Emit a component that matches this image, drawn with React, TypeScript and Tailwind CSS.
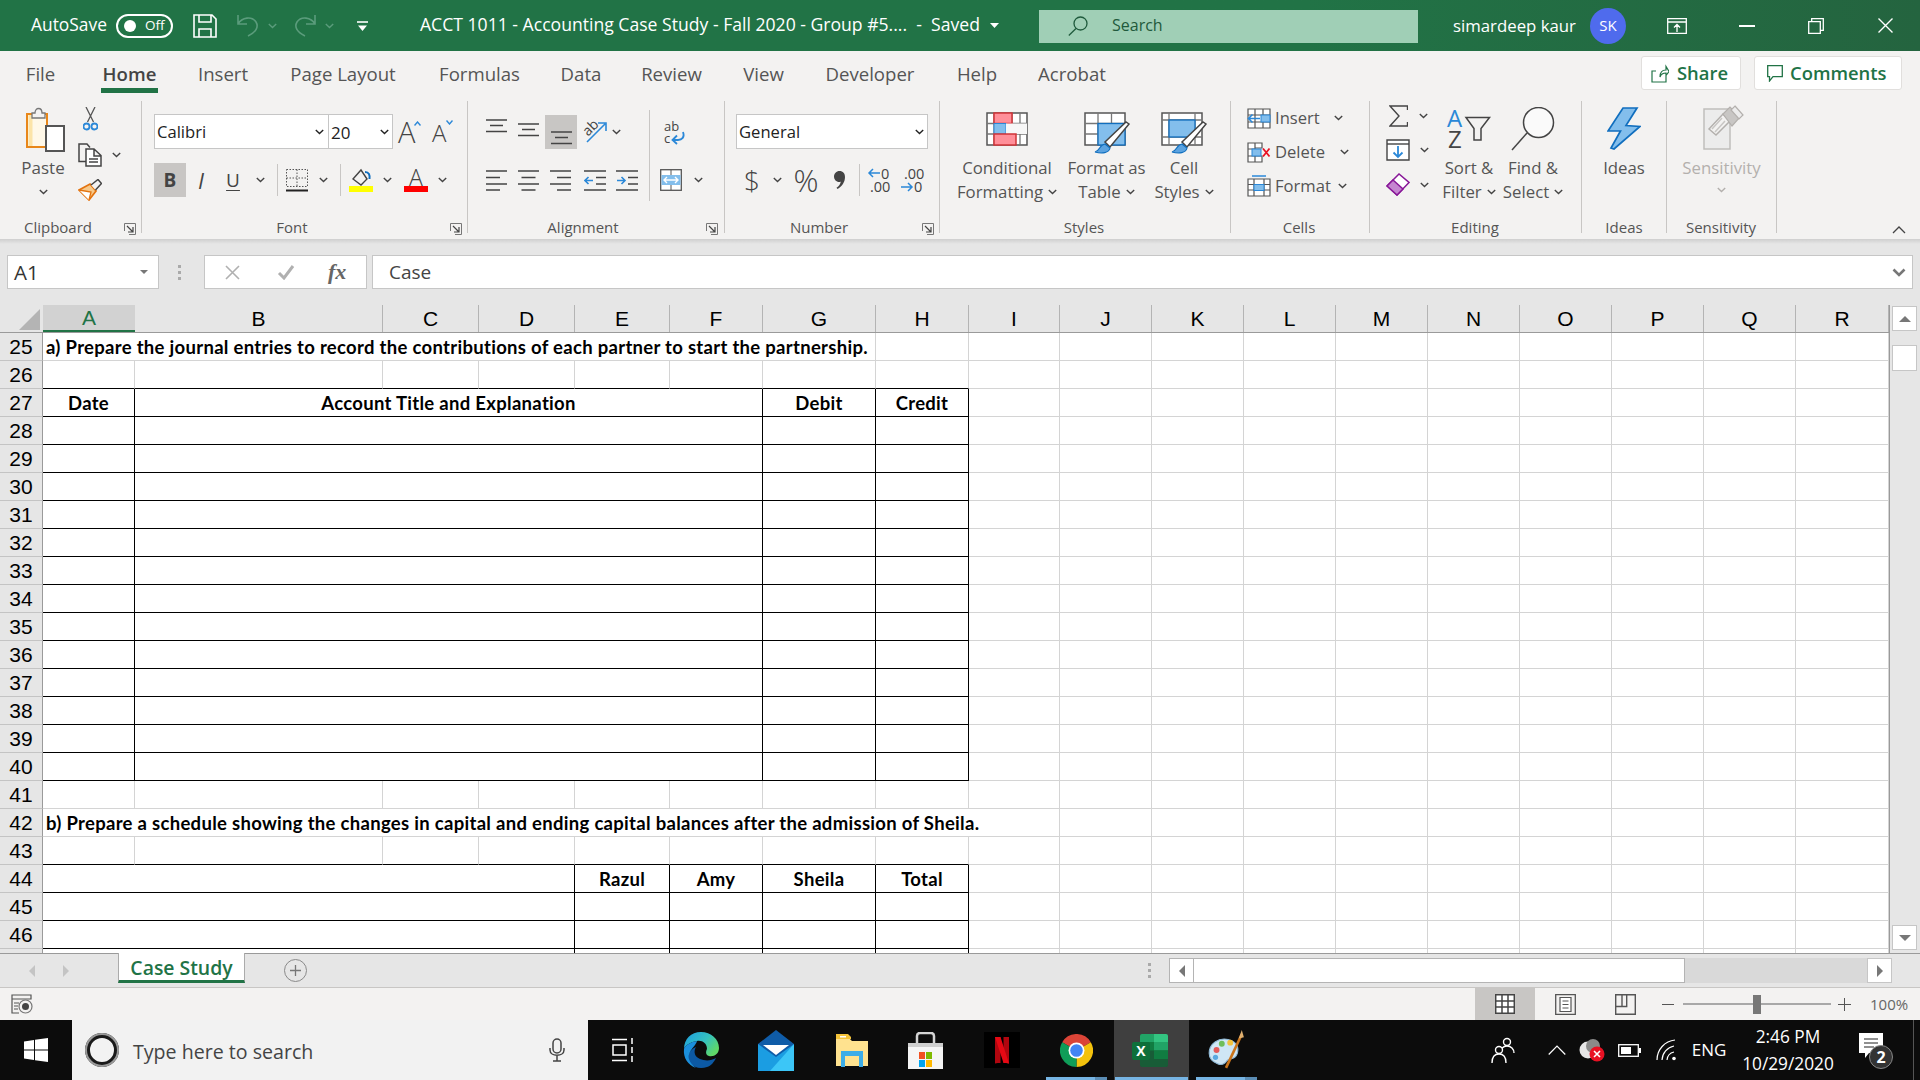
import React from "react";

const Chev = ({ c = "#444", cls = "" }: { c?: string; cls?: string }) => (
  <svg width="9" height="6" viewBox="0 0 9 6" className={`shrink-0 ${cls}`}>
    <path d="M.8 1l3.7 3.6L8.2 1" fill="none" stroke={c} strokeWidth="1.4" />
  </svg>
);

const Launcher = ({ cls }: { cls: string }) => (
  <svg width="12" height="12" viewBox="0 0 12 12" className={`shrink-0 mt-[5px] ${cls}`}>
    <path d="M.5 8V.5H11.5V11.5H5" fill="none" stroke="#777" strokeWidth="1" />
    <path d="M3 3l5.5 5.5M9 4v5H4" fill="none" stroke="#444" strokeWidth="1.2" />
  </svg>
);

const Lines = ({ d, w = 21, h = 14, cls = "" }: { d: string; w?: number; h?: number; cls?: string }) => (
  <svg width={w} height={h} viewBox={`0 0 ${w} ${h}`} className={`shrink-0 ${cls}`}>
    <path d={d} fill="none" stroke="#444" strokeWidth="1.5" />
  </svg>
);

const Group = ({ w, label, lcls, launcher, children }: { w: string; label: string; lcls: string; launcher?: string; children: React.ReactNode }) => (
  <div className={`${w} h-[132px] mt-[4px] border-r border-[#c8c6c4] flex flex-col shrink-0`}>
    <div className="h-[117px] flex shrink-0">{children}</div>
    <div className="h-[15px] flex items-start">
      <span className={`${lcls} text-center leading-[18px] text-[15px] text-[#555] whitespace-nowrap shrink-0`}>{label}</span>
      {launcher && <Launcher cls={launcher} />}
    </div>
  </div>
);

const Brush = () => (
  <g>
    <path d="M45 12l-3-2-21 20 5 5z" fill="#fff" stroke="#444" strokeWidth="1.5" />
    <path d="M11 40c5-1 4-7 10-8l5 4c-1 5-8 6-15 4z" fill="#5ba3e0" stroke="#106ebe" strokeWidth="1.2" />
  </g>
);

const TitleBar = () => (
  <div className="h-[51px] shrink-0 flex items-center text-white bg-linear-to-r from-[#217346] from-[68%] to-[#24643f] text-[16.8px]">
    <span className="ml-[31px] w-[76px] whitespace-nowrap -mt-[3px] text-[17.4px]">AutoSave</span>
    <div className="ml-[9px] w-[57px] h-[24px] rounded-full border-2 border-white flex items-center shrink-0">
      <span className="ml-[6px] w-[12px] h-[12px] rounded-full bg-white"></span>
      <span className="ml-[9px] text-[13.5px]">Off</span>
    </div>
    <svg width="24" height="24" viewBox="0 0 24 24" className="ml-[20px] shrink-0">
      <path d="M1 1h18l4 4v18H1zM6 1v7h12V1M6 23v-8h12v8" fill="none" stroke="#fff" strokeWidth="1.6" />
    </svg>
    <svg width="22" height="23" viewBox="0 0 22 23" className="ml-[20px] shrink-0">
      <path d="M1 1v9h9M1 10C5 3 15 2 19 8c3 5 0 10-8 14" fill="none" stroke="#5b9c7c" strokeWidth="1.6" />
    </svg>
    <Chev c="#5b9c7c" cls="ml-[9px]" />
    <svg width="22" height="23" viewBox="0 0 22 23" className="ml-[17px] shrink-0">
      <path d="M21 1v9h-9M21 10C17 3 7 2 3 8c-3 5 0 10 8 14" fill="none" stroke="#5b9c7c" strokeWidth="1.6" />
    </svg>
    <Chev c="#5b9c7c" cls="ml-[9px]" />
    <svg width="11" height="10" viewBox="0 0 11 10" className="ml-[23px] shrink-0">
      <path d="M0 1h11" stroke="#fff" strokeWidth="1.6" />
      <path d="M1 4.500h9L5.500 10z" fill="#fff" />
    </svg>
    <span className="ml-[52px] w-[559px] whitespace-pre shrink-0 text-[17.6px] -mt-[3px]">ACCT 1011 - Accounting Case Study - Fall 2020 - Group #5....  -  Saved</span>
    <svg width="9" height="5" viewBox="0 0 9 5" className="ml-[11px] shrink-0"><path d="M0 0h9L4.500 5z" fill="#fff" /></svg>
    <div className="ml-[40px] w-[379px] h-[33px] mt-px bg-[#a0cfb6] flex items-center shrink-0 text-[#1f5a3c]">
      <svg width="20" height="20" viewBox="0 0 20 20" className="ml-[29px] shrink-0">
        <circle cx="12.500" cy="7.500" r="6.500" fill="none" stroke="#1f5a3c" strokeWidth="1.3" />
        <path d="M8 12.500L.8 19.500" stroke="#1f5a3c" strokeWidth="1.3" />
      </svg>
      <span className="ml-[24px] text-[16px] -mt-[2px]">Search</span>
    </div>
    <span className="ml-[35px] w-[122px] whitespace-nowrap shrink-0">simardeep kaur</span>
    <div className="ml-[15px] w-[36px] h-[36px] rounded-full bg-[#4f6bed] flex items-center justify-center text-[15px] shrink-0">SK</div>
    <svg width="20" height="16" viewBox="0 0 20 16" className="ml-[41px] shrink-0">
      <path d="M.7.7h18.600v14.600H.7zM.7 4h18.600M10 14V7M7 9.500L10 6.500l3 3" fill="none" stroke="#fff" strokeWidth="1.3" />
    </svg>
    <div className="ml-[52px] w-[16px] h-[2px] bg-white shrink-0"></div>
    <svg width="16" height="16" viewBox="0 0 16 16" className="ml-[53px] shrink-0">
      <path d="M.7 3.700h11.600v11.600H.7zM3.700 3.700V.7h11.600v11.600h-3" fill="none" stroke="#fff" strokeWidth="1.3" />
    </svg>
    <svg width="15" height="15" viewBox="0 0 15 15" className="ml-[54px] shrink-0">
      <path d="M.5.500l14 14M14.500.5l-14 14" stroke="#fff" strokeWidth="1.4" />
    </svg>
  </div>
);

const Tab = ({ w, ml, children, active }: { w: string; ml: string; children: string; active?: boolean }) => (
  <div className={`${w} ${ml} h-[46px] flex flex-col items-center shrink-0`}>
    <span className={`mt-[10px] leading-[26px] h-[26px] whitespace-nowrap text-[18.6px] ${active ? "font-semibold text-[#444]" : "text-[#555]"}`}>{children}</span>
    {active && <span className="mt-px w-full h-[5px] bg-[#217346]"></span>}
  </div>
);

const TabRow = () => (
  <div className="h-[46px] shrink-0 bg-[#f3f2f1] flex items-start">
    <Tab w="w-[29px]" ml="ml-[26px]">File</Tab>
    <Tab w="w-[57px]" ml="ml-[46px]" active>Home</Tab>
    <Tab w="w-[48px]" ml="ml-[41px]">Insert</Tab>
    <Tab w="w-[106px]" ml="ml-[43px]">Page Layout</Tab>
    <Tab w="w-[81px]" ml="ml-[43px]">Formulas</Tab>
    <Tab w="w-[40px]" ml="ml-[41px]">Data</Tab>
    <Tab w="w-[59px]" ml="ml-[41px]">Review</Tab>
    <Tab w="w-[41px]" ml="ml-[42px]">View</Tab>
    <Tab w="w-[90px]" ml="ml-[41px]">Developer</Tab>
    <Tab w="w-[40px]" ml="ml-[42px]">Help</Tab>
    <Tab w="w-[70px]" ml="ml-[40px]">Acrobat</Tab>
    <button className="ml-[534px] mt-[5px] w-[100px] h-[34px] bg-white border border-[#e1dfdd] rounded-[3px] flex items-center shrink-0 text-[#217346] font-semibold text-[18.4px]">
      <svg width="18" height="19" viewBox="0 0 18 19" className="ml-[9px] shrink-0">
        <path d="M15 11v7H1V7h4M9 13c0-5 2-7 6-7V2.500l3 5-3 4V9c-3 0-5 1-6 4z" fill="none" stroke="#217346" strokeWidth="1.2" />
      </svg>
      <span className="ml-[8px]">Share</span>
    </button>
    <button className="ml-[13px] mt-[5px] w-[148px] h-[34px] bg-white border border-[#e1dfdd] rounded-[3px] flex items-center shrink-0 text-[#217346] font-semibold text-[18.4px]">
      <svg width="16" height="17" viewBox="0 0 16 17" className="ml-[12px] shrink-0">
        <path d="M.7.7h14.600v11H6L2.500 16v-4.300H.7z" fill="none" stroke="#217346" strokeWidth="1.3" />
      </svg>
      <span className="ml-[7px]">Comments</span>
    </button>
  </div>
);

const Combo = ({ w, text, cw, mlcls }: { w: string; text: string; cw: string; mlcls: string }) => (
  <div className={`${w} ${mlcls} h-[35px] bg-white border border-[#c6c6c6] flex items-center shrink-0 text-[#222] text-[16.6px]`}>
    <span className={`${cw} ml-[2px] mt-[2px] shrink-0`}>{text}</span>
    <Chev c="#222" />
  </div>
);

const Clipboard = () => (
  <Group w="w-[142px]" label="Clipboard" lcls="ml-[18px] w-[80px]" launcher="ml-[26px]">
    <div className="ml-[23px] w-[40px] flex flex-col items-center shrink-0">
      <svg width="40" height="45" viewBox="0 0 40 45" className="mt-[6px] ml-[3px] shrink-0 overflow-visible">
        <rect x="2" y="7" width="20" height="33" fill="#fff8e8" stroke="#e8871a" strokeWidth="2" />
        <rect x="3.500" y="8" width="4" height="31" fill="#fce4a8" />
        <path d="M7 11V6h3c0-6 7-6 7 0h3v5z" fill="#f3f2f1" stroke="#777" strokeWidth="1.3" />
        <rect x="21" y="19" width="18" height="25" fill="#fff" stroke="#555" strokeWidth="2" />
      </svg>
      <span className="mt-[5px] leading-[22px] text-[17px] text-[#555]">Paste</span>
      <Chev cls="mt-[10px]" />
    </div>
    <div className="ml-[15px] flex flex-col shrink-0">
      <svg width="15" height="24" viewBox="0 0 15 24" className="ml-[5px] mt-[6px] shrink-0">
        <path d="M3 0l7.500 15M12 0L4.500 15" stroke="#555" strokeWidth="1.3" fill="none" />
        <circle cx="3.500" cy="19.500" r="3" fill="none" stroke="#2b88d8" strokeWidth="1.800" />
        <circle cx="11.500" cy="19.500" r="3" fill="none" stroke="#2b88d8" strokeWidth="1.800" />
      </svg>
      <div className="flex items-center mt-[12px]">
        <svg width="24" height="24" viewBox="0 0 24 24" className="shrink-0">
          <path d="M8 18.500H1V1h8l3 3.500" fill="none" stroke="#444" strokeWidth="1.5" />
          <path d="M8 6h8l7 6.500V23H8zM16 6v7h7M11 16h9M11 19h9" fill="#fff" stroke="#444" strokeWidth="1.5" />
        </svg>
        <Chev cls="ml-[10px]" />
      </div>
      <svg width="24" height="22" viewBox="0 0 24 22" className="mt-[12px] shrink-0">
        <path d="M1 11l11-6 6 7-7 9z" fill="#f7c98a" stroke="#e3730f" strokeWidth="1.700" />
        <path d="M1 11l12 2-2 8" fill="#fff" stroke="#e3730f" strokeWidth="1.300" />
        <path d="M13 6l7-5.500 3.500 4L17.500 11" fill="#f3f2f1" stroke="#444" strokeWidth="1.500" />
      </svg>
    </div>
  </Group>
);

const Font = () => (
  <Group w="w-[326px]" label="Font" lcls="ml-[120px] w-[60px]" launcher="ml-[128px]">
    <div className="flex flex-col">
      <div className="mt-[13px] h-[35px] flex items-center">
        <Combo w="w-[175px]" mlcls="ml-[12px]" text="Calibri" cw="w-[158px]" />
        <div className="-ml-px w-[65px] h-[35px] bg-white border border-[#c6c6c6] flex items-center shrink-0 text-[#222] text-[17px]">
          <span className="ml-[2px] mt-[2px] w-[49px]">20</span>
          <Chev c="#222" />
        </div>
        <div className="ml-[5px] w-[22px] flex items-start shrink-0">
          <span className="text-[29px] leading-[27px] text-[#444] font-light">A</span>
          <svg width="7" height="5" viewBox="0 0 7 5" className="mt-[3px] -ml-px shrink-0"><path d="M.5 4.500l3-3.500 3 3.500" fill="none" stroke="#2b88d8" strokeWidth="1.400" /></svg>
        </div>
        <div className="ml-[12px] w-[22px] flex items-start shrink-0">
          <span className="text-[24px] leading-[27px] text-[#444] font-light mt-[2px]">A</span>
          <svg width="7" height="5" viewBox="0 0 7 5" className="mt-[3px] shrink-0"><path d="M.5.500l3 3.500 3-3.500" fill="none" stroke="#2b88d8" strokeWidth="1.400" /></svg>
        </div>
      </div>
      <div className="mt-[14px] h-[34px] flex items-center text-[#444]">
        <span className="ml-[12px] w-[32px] h-[34px] bg-[#c8c6c4] flex items-center justify-center font-bold text-[19px] shrink-0">B</span>
        <span className="ml-[7px] w-[16px] text-center italic text-[22px] shrink-0">I</span>
        <span className="ml-[16px] w-[16px] text-center text-[19px] underline underline-offset-[3px] shrink-0">U</span>
        <Chev cls="ml-[15px]" />
        <span className="ml-[12px] w-px h-[32px] bg-[#c8c6c4] shrink-0"></span>
        <svg width="22" height="23" viewBox="0 0 22 23" className="ml-[8px] shrink-0">
          <path d="M.5.500h21v17H.5zM11 .5v17M.5 9h21" fill="none" stroke="#555" strokeWidth="1" strokeDasharray="1.500 1.500" />
          <path d="M0 21.500h22" stroke="#222" strokeWidth="2" />
        </svg>
        <Chev cls="ml-[11px]" />
        <span className="ml-[12px] w-px h-[32px] bg-[#c8c6c4] shrink-0"></span>
        <svg width="24" height="24" viewBox="0 0 24 24" className="ml-[8px] shrink-0">
          <path d="M4 11l8-9 6 9-6 6z" fill="none" stroke="#444" strokeWidth="1.400" />
          <path d="M16 4c4 0 5 3 4.500 7" fill="none" stroke="#106ebe" strokeWidth="2" />
          <rect x="0" y="18" width="24" height="6" fill="#ffff00" />
        </svg>
        <Chev cls="ml-[10px]" />
        <div className="ml-[12px] w-[24px] h-[24px] flex flex-col items-center shrink-0">
          <span className="text-[23px] leading-[18px] h-[18px] font-light">A</span>
          <span className="w-[24px] h-[6px] bg-[#ff0000]"></span>
        </div>
        <Chev cls="ml-[10px]" />
      </div>
    </div>
  </Group>
);

const L3 = "M0 1h21M4 6.500h13M0 12.500h21";
const Alignment = () => (
  <Group w="w-[257px]" label="Alignment" lcls="ml-[65px] w-[100px]" launcher="ml-[73px]">
    <div className="w-[181px] flex flex-col shrink-0">
      <div className="mt-[14px] h-[34px] flex items-start">
        <Lines d={L3} cls="ml-[18px] mt-[4px]" />
        <Lines d={L3} cls="ml-[11px] mt-[8px]" />
        <div className="ml-[6px] w-[32px] h-[34px] bg-[#c8c6c4] flex items-end justify-center pb-[4px] shrink-0"><Lines d={L3} /></div>
        <svg width="24" height="24" viewBox="0 0 24 24" className="ml-[6px] mt-[4px] shrink-0 overflow-visible">
          <text x="0" y="14" fontSize="14" fill="#444" transform="rotate(-45 7 10)" fontFamily="Open Sans">ab</text>
          <path d="M4 23L22 5M15 4h8v8" fill="none" stroke="#2b88d8" strokeWidth="1.600" />
        </svg>
        <Chev cls="ml-[5px] mt-[14px]" />
      </div>
      <div className="mt-[14px] h-[34px] flex items-center">
        <Lines d="M0 1h21M0 7.500h14M0 14h21M0 20h14" h={21} cls="ml-[18px]" />
        <Lines d="M0 1h21M3.500 7.500h14M0 14h21M3.500 20h14" h={21} cls="ml-[11px]" />
        <Lines d="M0 1h21M7 7.500h14M0 14h21M7 20h14" h={21} cls="ml-[11px]" />
        <svg width="22" height="21" viewBox="0 0 22 21" className="ml-[13px] shrink-0">
          <path d="M0 1h22M12 7.500h10M12 14h10M0 20h22" stroke="#444" strokeWidth="1.500" />
          <path d="M9 10.500H1M4.500 7L1 10.500 4.500 14" fill="none" stroke="#2b88d8" strokeWidth="1.600" />
        </svg>
        <svg width="22" height="21" viewBox="0 0 22 21" className="ml-[10px] shrink-0">
          <path d="M0 1h22M12 7.500h10M12 14h10M0 20h22" stroke="#444" strokeWidth="1.500" />
          <path d="M1 10.500h8M5.500 7L9 10.500 5.500 14" fill="none" stroke="#2b88d8" strokeWidth="1.600" />
        </svg>
      </div>
    </div>
    <span className="w-px h-[91px] mt-[9px] bg-[#c8c6c4] shrink-0"></span>
    <div className="ml-[10px] flex flex-col">
      <svg width="22" height="24" viewBox="0 0 22 24" className="ml-[4px] mt-[20px] shrink-0 overflow-visible">
        <text x="0" y="10" fontSize="13" fill="#444" fontFamily="Open Sans">ab</text>
        <text x="0" y="22" fontSize="13" fill="#444" fontFamily="Open Sans">c</text>
        <path d="M19 11c2 5-1 8-5 8H9M13 14.500L8.500 19l4.500 4" fill="none" stroke="#2b88d8" strokeWidth="1.800" />
      </svg>
      <div className="mt-[24px] flex items-center">
        <svg width="22" height="22" viewBox="0 0 22 22" className="shrink-0">
          <rect x=".7" y=".7" width="20.600" height="20.600" fill="#fff" stroke="#555" strokeWidth="1.300" />
          <rect x="1.500" y="6" width="19" height="10" fill="#83beec" />
          <path d="M4 11h14M7 8l-3 3 3 3M15 8l3 3-3 3" fill="none" stroke="#fff" strokeWidth="1.400" />
          <path d="M11 1v5M11 16v5" stroke="#555" />
        </svg>
        <Chev cls="ml-[12px]" />
      </div>
    </div>
  </Group>
);

const Number_ = () => (
  <Group w="w-[215px]" label="Number" lcls="ml-[54px] w-[80px]" launcher="ml-[63px]">
    <div className="flex flex-col">
      <div className="mt-[13px] h-[35px] flex items-center">
        <Combo w="w-[192px]" mlcls="ml-[11px]" text="General" cw="w-[176px]" />
      </div>
      <div className="mt-[14px] h-[34px] flex items-center text-[#444]">
        <span className="ml-[17px] w-[20px] text-center text-[28px] font-light leading-none shrink-0">$</span>
        <Chev cls="ml-[11px]" />
        <span className="ml-[9px] w-[30px] text-center text-[31px] font-light leading-none shrink-0">%</span>
        <svg width="12" height="19" viewBox="0 0 12 19" className="ml-[13px] shrink-0">
          <path d="M5.500 0C9 0 11 2.500 11 6c0 5-3 9.500-7.500 12l-1-1.200C5 15 6.500 13 6.800 10.500c-.5.400-1 .5-1.600.5C2.300 11 0 8.500 0 5.500 0 2.500 2.300 0 5.500 0z" fill="#444" />
        </svg>
        <span className="ml-[13px] w-px h-[32px] bg-[#c8c6c4] shrink-0"></span>
        <svg width="24" height="26" viewBox="0 0 24 26" className="ml-[8px] shrink-0 overflow-visible">
          <path d="M12 6H1M5 2L1 6l4 4" fill="none" stroke="#2b88d8" strokeWidth="1.500" />
          <text x="13" y="12" fontSize="14.500" fill="#444" fontFamily="Open Sans">0</text>
          <text x="2" y="25" fontSize="14.500" fill="#444" fontFamily="Open Sans">.00</text>
        </svg>
        <svg width="24" height="26" viewBox="0 0 24 26" className="ml-[8px] shrink-0 overflow-visible">
          <text x="4" y="12" fontSize="14.500" fill="#444" fontFamily="Open Sans">.00</text>
          <path d="M1 20h11M8 16l4 4-4 4" fill="none" stroke="#2b88d8" strokeWidth="1.500" />
          <text x="14" y="25" fontSize="14.500" fill="#444" fontFamily="Open Sans">0</text>
        </svg>
      </div>
    </div>
  </Group>
);

const Lab2 = ({ a, b, chev = true, dim }: { a: string; b: string; chev?: boolean; dim?: boolean }) => (
  <div className={`flex flex-col items-center text-[16.8px] leading-[24px] whitespace-nowrap ${dim ? "text-[#b3b0ad]" : "text-[#555]"}`}>
    <span>{a}</span>
    <span className="flex items-center gap-[5px]">{b}{chev && <Chev />}</span>
  </div>
);

const Styles = () => (
  <Group w="w-[291px]" label="Styles" lcls="ml-[104px] w-[80px]">
    <div className="ml-[12px] w-[110px] flex flex-col items-center shrink-0">
      <div className="h-[55px] pt-[11px] shrink-0">
        <svg width="42" height="34" viewBox="0 0 42 34">
          <rect x="1" y="1" width="40" height="32" fill="#fff" stroke="#555" strokeWidth="1.500" />
          <path d="M8 1v32M26 1v32M34 1v32M1 11.500h40M1 22h40" stroke="#777" strokeWidth="1.300" />
          <rect x="8" y="1" width="18" height="10.500" fill="#ff8f99" stroke="#d13438" strokeWidth="1.500" />
          <rect x="8" y="11.500" width="12" height="10.500" fill="#83beec" stroke="#2b88d8" strokeWidth="1" />
          <rect x="20" y="11.500" width="21" height="10.500" fill="#f7f7f7" />
          <rect x="8" y="22" width="22" height="11" fill="#ff8f99" stroke="#d13438" strokeWidth="1.500" />
        </svg>
      </div>
      <Lab2 a="Conditional" b="Formatting" />
    </div>
    <div className="w-[89px] flex flex-col items-center shrink-0">
      <div className="h-[55px] pt-[11px] shrink-0">
        <svg width="46" height="42" viewBox="0 0 46 42">
          <rect x="1" y="1" width="40" height="32" fill="#fff" stroke="#555" strokeWidth="1.500" />
          <path d="M14 1v32M27.500 1v32M1 11.500h40M1 22h40" stroke="#777" strokeWidth="1.300" />
          <rect x="14" y="11.500" width="27" height="21.500" fill="#83beec" stroke="#106ebe" strokeWidth="1.300" />
          <Brush />
        </svg>
      </div>
      <Lab2 a="Format as" b="Table" />
    </div>
    <div className="w-[66px] flex flex-col items-center shrink-0">
      <div className="h-[55px] pt-[11px] shrink-0">
        <svg width="46" height="42" viewBox="0 0 46 42">
          <rect x="1" y="1" width="40" height="32" fill="#fff" stroke="#555" strokeWidth="1.500" />
          <path d="M8 1v32M34 1v32M1 8h40M1 25h40" stroke="#777" strokeWidth="1.300" />
          <rect x="8" y="8" width="26" height="17" fill="#83beec" stroke="#106ebe" strokeWidth="1.300" />
          <Brush />
        </svg>
      </div>
      <Lab2 a="Cell" b="Styles" />
    </div>
  </Group>
);

const CellRow = ({ icon, text, w, chevMl }: { icon: React.ReactNode; text: string; w: string; chevMl: string }) => (
  <div className="h-[34px] flex items-center text-[16.6px] text-[#555]">
    {icon}
    <span className={`ml-[4px] ${w} whitespace-nowrap shrink-0`}>{text}</span>
    <Chev cls={chevMl} />
  </div>
);

const Cells = () => (
  <Group w="w-[139px]" label="Cells" lcls="ml-[48px] w-[40px]">
    <div className="ml-[16px] flex flex-col">
      <CellRow text="Insert" w="w-[45px]" chevMl="ml-[14px]" icon={
        <svg width="24" height="21" viewBox="0 0 24 21" className="shrink-0">
          <path d="M1 1h22v19H1zM1 7h22M1 14h22M8 1v19M16 1v19" fill="#fff" stroke="#555" strokeWidth="1.200" />
          <rect x="14" y="7" width="9" height="7" fill="#83beec" stroke="#2b88d8" />
          <path d="M13 10.500H1.500M5.500 6.500l-4 4 4 4" fill="none" stroke="#2b88d8" strokeWidth="1.600" />
        </svg>} />
      <CellRow text="Delete" w="w-[51px]" chevMl="ml-[14px]" icon={
        <svg width="24" height="21" viewBox="0 0 24 21" className="shrink-0">
          <path d="M1 1h14v5h-7v8h7v6H1zM1 7h7M1 14h7M8 1v5M8 14v6" fill="#fff" stroke="#555" strokeWidth="1.200" />
          <rect x="5" y="7" width="9" height="7" fill="#83beec" stroke="#2b88d8" />
          <path d="M16 6.500l6.500 8M22.500 6.500l-6.500 8" stroke="#e81123" strokeWidth="1.800" />
        </svg>} />
      <CellRow text="Format" w="w-[57px]" chevMl="ml-[6px]" icon={
        <svg width="24" height="22" viewBox="0 0 24 22" className="shrink-0">
          <path d="M1 4h22v17H1zM1 9.500h22M1 15h22M7 4v17M17 4v17" fill="#fff" stroke="#555" strokeWidth="1.200" />
          <rect x="7" y="9.500" width="10" height="6" fill="#83beec" stroke="#2b88d8" />
          <path d="M5 1h14" stroke="#2b88d8" strokeWidth="1.500" />
        </svg>} />
    </div>
  </Group>
);

const Editing = () => (
  <Group w="w-[212px]" label="Editing" lcls="ml-[75px] w-[60px]">
    <div className="ml-[16px] w-[52px] flex flex-col shrink-0">
      <div className="mt-[4px] h-[22px] flex items-center">
        <svg width="19" height="22" viewBox="0 0 19 22" className="ml-[3px] shrink-0">
          <path d="M18.500 5V1H1l9 10-9 10h17.500v-4" fill="none" stroke="#444" strokeWidth="1.400" />
        </svg>
        <Chev cls="ml-[11px]" />
      </div>
      <div className="mt-[12px] h-[22px] flex items-center">
        <svg width="24" height="22" viewBox="0 0 24 22" className="shrink-0">
          <path d="M1 1h22v20H1z" fill="#fff" stroke="#444" strokeWidth="1.400" />
          <path d="M1 5h22" stroke="#444" strokeWidth="1.400" />
          <path d="M12 7v11M7.500 13.500L12 18l4.500-4.500" fill="none" stroke="#2b88d8" strokeWidth="1.800" />
        </svg>
        <Chev cls="ml-[10px]" />
      </div>
      <div className="mt-[12px] h-[23px] flex items-center">
        <svg width="24" height="23" viewBox="0 0 24 23" className="shrink-0">
          <path d="M1 13L13 1l10 8.500L11 22z" fill="#fff" stroke="#881798" strokeWidth="1.500" />
          <path d="M1 13l6-6 10 9-6 6z" fill="#c586d0" stroke="#881798" strokeWidth="1.500" />
        </svg>
        <Chev cls="ml-[10px]" />
      </div>
    </div>
    <div className="w-[62px] flex flex-col items-center shrink-0">
      <div className="h-[55px] pt-[7px] shrink-0">
        <svg width="44" height="41" viewBox="0 0 44 41" className="overflow-visible">
          <text x="0" y="19" fontSize="24" fill="#2b88d8" fontFamily="Open Sans">A</text>
          <text x="1" y="40" fontSize="24" fill="#444" fontFamily="Open Sans">Z</text>
          <path d="M19 9.500h23.500L34 20.500V32h-7V20.500z" fill="none" stroke="#444" strokeWidth="1.500" />
        </svg>
      </div>
      <Lab2 a="Sort &" b="Filter" />
    </div>
    <div className="w-[66px] flex flex-col items-center shrink-0">
      <div className="h-[55px] pt-[6px] shrink-0">
        <svg width="44" height="44" viewBox="0 0 44 44">
          <circle cx="27.500" cy="15.500" r="15" fill="#fafafa" stroke="#444" strokeWidth="1.500" />
          <path d="M16 26L1 43" stroke="#444" strokeWidth="1.500" />
        </svg>
      </div>
      <Lab2 a="Find &" b="Select" />
    </div>
  </Group>
);

const Ideas = () => (
  <Group w="w-[85px]" label="Ideas" lcls="ml-[12px] w-[60px]">
    <div className="w-full flex flex-col items-center">
      <div className="h-[55px] pt-[6px] shrink-0">
        <svg width="34" height="43" viewBox="0 0 34 43">
          <path d="M16 1h14L19 18.500 33 19.500 7 42l-3-1 9.500-17L1 24z" fill="#83beec" stroke="#106ebe" strokeWidth="1.700" />
        </svg>
      </div>
      <span className="text-[16.8px] leading-[24px] text-[#555]">Ideas</span>
    </div>
  </Group>
);

const Sensitivity = () => (
  <Group w="w-[110px]" label="Sensitivity" lcls="ml-[14px] w-[80px]">
    <div className="w-full flex flex-col items-center">
      <div className="h-[55px] pt-[4px] ml-[4px] shrink-0">
        <svg width="41" height="45" viewBox="0 0 41 45">
          <path d="M1 4h26v40H1z" fill="#ececec" stroke="#c0bebc" strokeWidth="1.500" />
          <path d="M6 24L20 9l7 7-14 14z" fill="#f3f2f1" stroke="#b3b0ad" strokeWidth="1.500" />
          <path d="M9 24l10-11M12 27L22 16" stroke="#c8c6c4" strokeWidth="1.500" />
          <path d="M20 9l7-7 10 10-8 9z" fill="#c8c6c4" stroke="#b3b0ad" strokeWidth="1.200" />
          <path d="M32 1l8 9-4 4-8-9z" fill="#ececec" stroke="#b3b0ad" strokeWidth="1.200" />
        </svg>
      </div>
      <span className="text-[16.8px] leading-[24px] text-[#b3b0ad]">Sensitivity</span>
      <Chev c="#b3b0ad" cls="mt-[7px]" />
    </div>
  </Group>
);

const Ribbon = () => (
  <div className="h-[142px] shrink-0 bg-[#f3f2f1] flex items-start">
    <Clipboard />
    <Font />
    <Alignment />
    <Number_ />
    <Styles />
    <Cells />
    <Editing />
    <Ideas />
    <Sensitivity />
    <svg width="14" height="8" viewBox="0 0 14 8" className="ml-[115px] mt-[129px] shrink-0">
      <path d="M1 7l6-6 6 6" fill="none" stroke="#444" strokeWidth="1.300" />
    </svg>
  </div>
);

const FormulaBar = () => (
  <div className="h-[66px] shrink-0 bg-[#e6e6e6] flex flex-col">
    <div className="h-[5px] shrink-0 bg-linear-to-b from-[#cfcfcf] to-[#e6e6e6]"></div>
    <div className="mt-[11px] h-[34px] flex items-center">
      <div className="ml-[7px] w-[152px] h-[34px] bg-white border border-[#c6c6c6] flex items-center shrink-0">
        <span className="ml-[6px] mt-px w-[126px] text-[20.5px] text-[#333]">A1</span>
        <svg width="8" height="4" viewBox="0 0 8 4" className="shrink-0"><path d="M0 0h8L4 4z" fill="#777" /></svg>
      </div>
      <svg width="4" height="15" viewBox="0 0 4 15" className="ml-[19px] shrink-0">
        <rect width="3" height="3" fill="#aaa" /><rect y="6" width="3" height="3" fill="#aaa" /><rect y="12" width="3" height="3" fill="#aaa" />
      </svg>
      <div className="ml-[22px] w-[163px] h-[34px] bg-white border border-[#c6c6c6] flex items-center shrink-0">
        <svg width="15" height="15" viewBox="0 0 15 15" className="ml-[20px] shrink-0"><path d="M1 1l13 13M14 1L1 14" stroke="#b0b0b0" strokeWidth="1.600" /></svg>
        <svg width="18" height="15" viewBox="0 0 18 15" className="ml-[37px] shrink-0"><path d="M2 8l5 5L16 1" fill="none" stroke="#b0b0b0" strokeWidth="3" /></svg>
        <span className="ml-[33px] font-['Liberation_Serif',serif] italic font-bold text-[22px] text-[#666] leading-none">fx</span>
      </div>
      <div className="ml-[5px] w-[1541px] h-[34px] bg-white border border-[#c6c6c6] flex items-center shrink-0">
        <span className="ml-[16px] mt-px w-[1503px] text-[19px] text-[#444]">Case</span>
        <svg width="14" height="9" viewBox="0 0 14 9" className="shrink-0"><path d="M1.500 1.500L7 7l5.500-5.500" fill="none" stroke="#777" strokeWidth="2.600" /></svg>
      </div>
    </div>
  </div>
);

const COLS: [string, string][] = [
  ["A", "w-[92px]"], ["B", "w-[248px]"], ["C", "w-[96px]"], ["D", "w-[96px]"], ["E", "w-[95px]"], ["F", "w-[93px]"], ["G", "w-[113px]"], ["H", "w-[93px]"],
  ["I", "w-[91px]"], ["J", "w-[92px]"], ["K", "w-[92px]"], ["L", "w-[92px]"], ["M", "w-[92px]"], ["N", "w-[92px]"], ["O", "w-[92px]"], ["P", "w-[92px]"], ["Q", "w-[92px]"], ["R", "w-[93px]"],
];

const GRAY = "border-r border-b border-[#d4d4d4]";
const BLACK = "border-r border-b border-black";
const BLACKB = "border-r border-b border-r-[#d4d4d4] border-b-black";

const Gc = ({ w, cls = GRAY, children }: { w: string; cls?: string; children?: React.ReactNode }) => (
  <div className={`${w} h-[28px] pt-[3px] shrink-0 ${cls} flex items-center justify-center text-[18.5px] tracking-[0.3px] text-black font-bold font-['Lato',sans-serif] whitespace-nowrap`}>{children}</div>
);

const Rest = ({ from }: { from: number }) => (
  <>{COLS.slice(from).map(([n, w]) => <Gc key={n} w={w} />)}</>
);

const Row = ({ n, children }: { n: number | ""; children: React.ReactNode }) => (
  <div className="flex h-[28px] shrink-0">
    <div className="w-[43px] h-[28px] shrink-0 bg-[#e6e6e6] border-r border-b border-r-[#9a9a9a] border-b-[#c4c4c4] flex items-center justify-center text-[21px] text-black font-['Liberation_Sans',sans-serif]">{n}</div>
    {children}
  </div>
);

const Sheet = () => {
  const rows: React.ReactNode[] = [];
  const plain = (n: number, black: boolean) => (
    <Row n={n} key={n}>
      {COLS.slice(0, 8).map(([l, w]) => <Gc key={l} w={w} cls={black ? BLACKB : GRAY} />)}
      <Rest from={8} />
    </Row>
  );
  const t1 = (n: number, labels: string[]) => (
    <Row n={n} key={n}>
      <Gc w="w-[92px]" cls={BLACK}>{labels[0]}</Gc>
      <Gc w="w-[628px]" cls={BLACK}>{labels[1]}</Gc>
      <Gc w="w-[113px]" cls={BLACK}>{labels[2]}</Gc>
      <Gc w="w-[93px]" cls={BLACK}>{labels[3]}</Gc>
      <Rest from={8} />
    </Row>
  );
  const t2 = (n: number | "", labels: string[], key: number) => (
    <Row n={n} key={key}>
      <Gc w="w-[532px]" cls={BLACK}></Gc>
      <Gc w="w-[95px]" cls={BLACK}>{labels[0]}</Gc>
      <Gc w="w-[93px]" cls={BLACK}>{labels[1]}</Gc>
      <Gc w="w-[113px]" cls={BLACK}>{labels[2]}</Gc>
      <Gc w="w-[93px]" cls={BLACK}>{labels[3]}</Gc>
      <Rest from={8} />
    </Row>
  );
  rows.push(
    <Row n={25} key={25}>
      <Gc w="w-[833px]"><span className="w-full pl-[3px]">a) Prepare the journal entries to record the contributions of each partner to start the partnership.</span></Gc>
      <Gc w="w-[93px]" />
      <Rest from={8} />
    </Row>
  );
  rows.push(plain(26, true));
  rows.push(t1(27, ["Date", "Account Title and Explanation", "Debit", "Credit"]));
  for (let i = 28; i <= 40; i++) rows.push(t1(i, ["", "", "", ""]));
  rows.push(plain(41, false));
  rows.push(
    <Row n={42} key={42}>
      <Gc w="w-[1017px]"><span className="w-full pl-[3px]">b) Prepare a schedule showing the changes in capital and ending capital balances after the admission of Sheila.</span></Gc>
      <Rest from={9} />
    </Row>
  );
  rows.push(plain(43, true));
  rows.push(t2(44, ["Razul", "Amy", "Sheila", "Total"], 44));
  rows.push(t2(45, ["", "", "", ""], 45));
  rows.push(t2(46, ["", "", "", ""], 46));
  rows.push(t2("", ["", "", "", ""], 47));

  return (
    <div className="h-[648px] shrink-0 flex bg-[#e6e6e6]">
      <div className="w-[1889px] h-[648px] shrink-0 flex flex-col overflow-hidden bg-white">
        <div className="flex h-[28px] shrink-0 bg-[#e6e6e6] border-b border-[#9a9a9a]">
          <div className="w-[43px] h-[27px] shrink-0 flex items-end justify-end pr-[3px] pb-[2px]">
            <svg width="21" height="21" viewBox="0 0 21 21"><path d="M21 0v21H0z" fill="#b4b4b4" /></svg>
          </div>
          {COLS.map(([l, w], i) => (
            <div key={l} className={`${w} h-[27px] pt-px shrink-0 flex items-center justify-center text-[21px] font-['Liberation_Sans',sans-serif] ${i === 0 ? "bg-[#d2d2d2] text-[#217346] border-b-2 border-[#217346]" : "text-black border-r border-[#b4b4b4]"}`}>{l}</div>
          ))}
        </div>
        {rows}
      </div>
      <div className="w-[31px] h-[648px] shrink-0 border-l border-[#9a9a9a] flex flex-col">
        <div className="ml-[2px] mt-px w-[25px] h-[25px] bg-white border border-[#c6c6c6] flex items-center justify-center shrink-0">
          <svg width="12" height="6" viewBox="0 0 12 6"><path d="M6 0l6 6H0z" fill="#777" /></svg>
        </div>
        <div className="ml-[2px] mt-[14px] w-[25px] h-[26px] bg-white border border-[#c6c6c6] shrink-0"></div>
        <div className="ml-[2px] mt-[554px] w-[25px] h-[25px] bg-white border border-[#c6c6c6] flex items-center justify-center shrink-0">
          <svg width="12" height="6" viewBox="0 0 12 6"><path d="M6 6l6-6H0z" fill="#777" /></svg>
        </div>
      </div>
    </div>
  );
};

const SheetBar = () => (
  <div className="h-[34px] shrink-0 bg-[#e6e6e6] border-t border-[#9a9a9a] flex items-center">
    <svg width="6" height="12" viewBox="0 0 6 12" className="ml-[29px] shrink-0"><path d="M6 0v12L0 6z" fill="#c4c4c4" /></svg>
    <svg width="6" height="12" viewBox="0 0 6 12" className="ml-[28px] shrink-0"><path d="M0 0v12l6-6z" fill="#c4c4c4" /></svg>
    <div className="ml-[49px] self-start w-[127px] h-[30px] bg-white border-x border-[#ababab] border-b-[3px] border-b-[#217346] flex items-center justify-center shrink-0 -mt-px">
      <span className="text-[19.4px] mt-[2px] font-semibold text-[#217346] whitespace-nowrap">Case Study</span>
    </div>
    <div className="ml-[39px] w-[23px] h-[23px] rounded-full border border-[#8a8a8a] flex items-center justify-center shrink-0">
      <svg width="11" height="11" viewBox="0 0 11 11"><path d="M5.500 0v11M0 5.500h11" stroke="#777" strokeWidth="1.300" /></svg>
    </div>
    <svg width="4" height="15" viewBox="0 0 4 15" className="ml-[841px] shrink-0">
      <rect width="3" height="3" fill="#aaa" /><rect y="6" width="3" height="3" fill="#aaa" /><rect y="12" width="3" height="3" fill="#aaa" />
    </svg>
    <div className="ml-[17px] w-[25px] h-[25px] bg-white border border-[#b4b4b4] flex items-center justify-center shrink-0">
      <svg width="6" height="12" viewBox="0 0 6 12"><path d="M6 0v12L0 6z" fill="#777" /></svg>
    </div>
    <div className="-ml-px w-[492px] h-[25px] bg-white border border-[#b4b4b4] shrink-0"></div>
    <div className="w-[182px] h-[25px] bg-[#d9d9d9] shrink-0"></div>
    <div className="w-[25px] h-[25px] bg-white border border-[#c6c6c6] flex items-center justify-center shrink-0">
      <svg width="6" height="12" viewBox="0 0 6 12"><path d="M0 0v12l6-6z" fill="#777" /></svg>
    </div>
  </div>
);

const StatusBar = () => (
  <div className="h-[33px] shrink-0 bg-[#f3f2f1] border-t border-[#c8c6c4] flex items-center">
    <svg width="22" height="20" viewBox="0 0 22 20" className="ml-[11px] shrink-0">
      <path d="M1 1h19v4H1zM1 5v14h7M3 9h5M3 12h4M3 15h4" fill="none" stroke="#555" strokeWidth="1.200" />
      <circle cx="14.500" cy="12.500" r="6.500" fill="#f3f2f1" stroke="#777" strokeWidth="1.200" />
      <circle cx="14.500" cy="12.500" r="3.500" fill="#444" />
    </svg>
    <div className="ml-[1442px] w-[60px] h-[32px] bg-[#c8c6c4] flex items-center justify-center shrink-0">
      <svg width="20" height="20" viewBox="0 0 20 20">
        <path d="M.7.7h18.600v18.600H.7zM7 .7v18.600M13 .7v18.600M.7 7h18.600M.7 13h18.600" fill="#fff" stroke="#444" strokeWidth="1.500" />
      </svg>
    </div>
    <div className="w-[60px] flex justify-center shrink-0">
      <svg width="21" height="21" viewBox="0 0 21 21">
        <path d="M.7.7h19.600v19.600H.7z" fill="none" stroke="#555" strokeWidth="1.300" />
        <path d="M5 3.500h11v14H5zM7.500 7h6M7.500 10.500h6M7.500 14h6" fill="#fff" stroke="#555" strokeWidth="1.200" />
      </svg>
    </div>
    <div className="w-[60px] flex justify-center shrink-0">
      <svg width="21" height="21" viewBox="0 0 21 21">
        <path d="M.7.700h19.600v19.600H.7zM.7 12.500h11V.7M7 .7v12M.7 12.500" fill="none" stroke="#555" strokeWidth="1.400" />
      </svg>
    </div>
    <div className="ml-[7px] w-[12px] h-px bg-[#555] shrink-0"></div>
    <div className="ml-[9px] w-[70px] h-[2px] bg-[#a8a8a8] shrink-0"></div>
    <div className="w-[8px] h-[19px] bg-[#777] shrink-0"></div>
    <div className="w-[70px] h-[2px] bg-[#a8a8a8] shrink-0"></div>
    <svg width="13" height="13" viewBox="0 0 13 13" className="ml-[7px] shrink-0"><path d="M6.500 0v13M0 6.500h13" stroke="#555" /></svg>
    <span className="ml-[19px] text-[15px] text-[#666] whitespace-nowrap">100%</span>
  </div>
);

const AppBtn = ({ children, under, cls = "" }: { children: React.ReactNode; under?: "sm" | "lg"; cls?: string }) => (
  <div className={`w-[75px] h-[60px] shrink-0 flex items-center justify-center relative ${cls}`}>
    {children}
    {under === "sm" && (
      <div className="absolute bottom-0 left-[7px] w-[61px] h-[3px] flex">
        <span className="w-[49px] bg-[#76b4e3]"></span><span className="w-[12px] bg-[#5b8db5]"></span>
      </div>
    )}
    {under === "lg" && <div className="absolute bottom-0 left-px w-[73px] h-[3px] bg-[#76b4e3]"></div>}
  </div>
);

const Taskbar = () => (
  <div className="h-[60px] shrink-0 bg-[#0c0c0c] flex items-center text-white">
    <svg width="24" height="24" viewBox="0 0 24 24" className="ml-[24px] shrink-0">
      <path d="M0 3.400L10 2v9.500H0zM11 1.800L24 0v11.500H11zM0 12.500h10V22L0 20.600zM11 12.500h13V24l-13-1.800z" fill="#fff" />
    </svg>
    <div className="ml-[24px] w-[516px] h-[60px] bg-[#f2f2f2] flex items-center shrink-0">
      <div className="ml-[13px] w-[34px] h-[34px] rounded-full border-[5px] border-[#1a1a1a] outline-2 outline-[#9a9a9a] -outline-offset-2 shrink-0"></div>
      <span className="ml-[14px] w-[180px] text-[19.6px] mt-[3px] text-[#444] whitespace-nowrap shrink-0">Type here to search</span>
      <svg width="16" height="24" viewBox="0 0 16 24" className="ml-[236px] shrink-0">
        <rect x="4" y="1" width="8" height="14" rx="4" fill="none" stroke="#444" strokeWidth="1.500" />
        <path d="M1 10v2c0 7 14 7 14 0v-2M8 18v5M4 23h8" fill="none" stroke="#444" strokeWidth="1.500" />
      </svg>
    </div>
    <svg width="25" height="24" viewBox="0 0 25 24" className="ml-[24px] shrink-0">
      <path d="M0 1.500h15M0 22.500h15M1 7h13v10H1zM20 0v6M20 9v6M20 18v6" fill="none" stroke="#fff" strokeWidth="1.500" />
    </svg>
    <div className="ml-[27px] flex shrink-0">
      <AppBtn>
        <svg width="36" height="37" viewBox="0 0 36 37" className="-ml-[2px]">
          <defs>
            <linearGradient id="eg" x1="0" y1="0" x2="1" y2=".6"><stop offset="0" stopColor="#1b9de2" /><stop offset=".6" stopColor="#35c1c0" /><stop offset="1" stopColor="#5fd868" /></linearGradient>
          </defs>
          <path d="M33 26c-5 3-11 3-16 1-5-2-7-7-4-12C6 18 3 25 7 31c4 5 11 6 17 4 4-1 7-5 9-9z" fill="#0c59a4" />
          <path d="M1 17C1 7 8 0 18 0c10 0 18 7 18 16 0 6-5 9-10 8-4-1-3-5-2-7 0-6-5-9-10-8C8 10 2 13 1 17z" fill="url(#eg)" />
          <path d="M1 17c-1 9 4 16 12 19-7-5-9-11-6-16 2-4 6-7 7-11C8 10 2 13 1 17z" fill="#1b8fdc" />
        </svg>
      </AppBtn>
      <AppBtn>
        <svg width="36" height="41" viewBox="0 0 36 41" className="-ml-[2px]">
          <path d="M0 14h36v27H0z" fill="#1b9de2" />
          <path d="M36 14v27H12z" fill="#3cc6f7" />
          <path d="M0 14L18 0l18 14-18 13z" fill="#0f5ca8" />
          <path d="M5 15h26L18 25z" fill="#fff" />
        </svg>
      </AppBtn>
      <AppBtn>
        <svg width="32" height="33" viewBox="0 0 32 33">
          <path d="M0 4h13l3 3h16v25H0z" fill="#ffe28f" />
          <path d="M0 0h12l3 3v2H0z" fill="#f5c43a" />
          <rect x="4" y="2" width="6" height="1.500" fill="#fff" />
          <path d="M5 33V17h22v16h-4v-11H9v11z" fill="#3dade8" />
        </svg>
      </AppBtn>
      <AppBtn>
        <svg width="35" height="37" viewBox="0 0 35 37" className="-ml-[2px]">
          <path d="M9 12V4c0-2 1-3 3-3h11c2 0 3 1 3 3v8" fill="none" stroke="#d4d4d4" strokeWidth="2.500" />
          <rect x="0" y="11" width="35" height="26" fill="#f5f5f5" />
          <rect x="0" y="11" width="35" height="4" fill="#cfcfcf" />
          <rect x="11" y="20" width="6" height="7" fill="#f25022" /><rect x="18" y="20" width="6" height="7" fill="#7fba00" />
          <rect x="11" y="28" width="6" height="7" fill="#00a4ef" /><rect x="18" y="28" width="6" height="7" fill="#ffb900" />
        </svg>
      </AppBtn>
      <AppBtn>
        <svg width="36" height="36" viewBox="0 0 36 36">
          <rect width="36" height="36" fill="#000" />
          <path d="M11 5h5.500v26c-2 0-3.500 0-5.500.500z" fill="#b1060f" />
          <path d="M19.500 5H25v26.500c-2-.5-3.500-.5-5.500-.5z" fill="#b1060f" />
          <path d="M11 5h5.500L25 31.500c-2-.5-3.500-.5-5.500-.5z" fill="#e50914" />
        </svg>
      </AppBtn>
      <AppBtn under="sm">
        <svg width="33" height="33" viewBox="0 0 33 33">
          <path d="M16.500 16.500L2.200 8.250A16.500 16.500 0 0 1 30.800 8.250z" fill="#db4437" />
          <path d="M16.500 16.500L30.800 8.250A16.500 16.500 0 0 1 16.500 33z" fill="#f4c20d" />
          <path d="M16.500 16.500V33A16.500 16.500 0 0 1 2.200 8.250z" fill="#0f9d58" />
          <circle cx="16.500" cy="16.500" r="8" fill="#fff" /><circle cx="16.500" cy="16.500" r="6.300" fill="#4285f4" />
        </svg>
      </AppBtn>
      <AppBtn under="lg" cls="bg-[#3f3f3f]">
        <svg width="36" height="33" viewBox="0 0 36 33" className="-ml-[3px]">
          <rect x="8" y="0" width="28" height="33" rx="2" fill="#185c37" />
          <path d="M8 2a2 2 0 0 1 2-2h12v8H8z" fill="#21a366" />
          <path d="M22 0h12a2 2 0 0 1 2 2v6H22z" fill="#33c481" />
          <rect x="8" y="8" width="14" height="8.500" fill="#107c41" /><rect x="22" y="8" width="14" height="8.500" fill="#21a366" />
          <rect x="22" y="16.500" width="14" height="8.500" fill="#107c41" />
          <rect x="0" y="8" width="18" height="18" rx="2" fill="#0e6f3a" />
          <text x="9" y="22" fontSize="14" fontWeight="700" fill="#fff" textAnchor="middle" fontFamily="Open Sans">X</text>
        </svg>
      </AppBtn>
      <AppBtn under="sm">
        <svg width="38" height="40" viewBox="0 0 36 38" className="-ml-[2px]">
          <path d="M2 22C2 13 11 7 20 9c9 2 11 9 8 15-2 4-7 3-9 5-2 3-5 5-9 3-5-2-8-5-8-10z" fill="#cfe6f5" stroke="#8fb9d6" strokeWidth="1" />
          <circle cx="9" cy="19" r="2.800" fill="#e35a5a" /><circle cx="14" cy="13" r="2.800" fill="#6fbe5a" /><circle cx="22" cy="12" r="2.800" fill="#f2c23e" /><circle cx="8" cy="26" r="2.500" fill="#5aa8e0" />
          <path d="M33 4L18 36" stroke="#c9741c" strokeWidth="2.500" />
          <path d="M30 8l3-8 2 7z" fill="#e0b070" />
        </svg>
      </AppBtn>
    </div>
    <svg width="24" height="28" viewBox="0 0 24 28" className="ml-[227px] shrink-0">
      <circle cx="16" cy="6" r="3.500" fill="none" stroke="#fff" strokeWidth="1.400" />
      <path d="M10 17c0-5 2-7 6-7s7 3 7 7" fill="none" stroke="#fff" strokeWidth="1.400" />
      <circle cx="8" cy="14" r="3.500" fill="#0c0c0c" stroke="#fff" strokeWidth="1.400" />
      <path d="M1 27c0-6 3-9 7-9s7 3 7 9" fill="none" stroke="#fff" strokeWidth="1.400" />
    </svg>
    <svg width="18" height="10" viewBox="0 0 18 10" className="ml-[33px] shrink-0"><path d="M.7 9.500L9 1l8.300 8.500" fill="none" stroke="#fff" strokeWidth="1.200" /></svg>
    <svg width="26" height="24" viewBox="0 0 26 24" className="ml-[13px] shrink-0">
      <circle cx="9" cy="12" r="8.500" fill="#e6e6e6" /><circle cx="14" cy="8" r="7" fill="#8a8a8a" />
      <circle cx="18" cy="16" r="7.500" fill="#e81123" /><path d="M15 13l6 6M21 13l-6 6" stroke="#fff" strokeWidth="1.600" />
    </svg>
    <svg width="23" height="13" viewBox="0 0 23 13" className="ml-[13px] shrink-0">
      <rect x=".7" y=".7" width="19.600" height="11.600" fill="none" stroke="#fff" strokeWidth="1.300" />
      <rect x="3" y="3" width="10" height="7" fill="#fff" /><rect x="21" y="4" width="2" height="5" fill="#fff" />
    </svg>
    <svg width="22" height="22" viewBox="0 0 22 22" className="ml-[15px] shrink-0">
      <path d="M1 21A20 20 0 0 1 19 1M6 21A15 15 0 0 1 18 7M11 21a9 9 0 0 1 7-8" fill="none" stroke="#fff" strokeWidth="1.200" />
      <circle cx="18" cy="19.500" r="1.800" fill="#fff" />
    </svg>
    <span className="ml-[11px] w-[40px] text-center text-[17px] whitespace-nowrap shrink-0">ENG</span>
    <div className="ml-[9px] w-[100px] flex flex-col items-center shrink-0 text-[17.3px]">
      <span className="leading-[27px] whitespace-nowrap">2:46 PM</span>
      <span className="leading-[27px] whitespace-nowrap">10/29/2020</span>
    </div>
    <svg width="36" height="36" viewBox="0 0 36 36" className="ml-[19px] shrink-0 mt-[2px]">
      <path d="M2 0h24v20H12l-4 5v-5H2z" fill="#fff" />
      <path d="M7 6h14M7 10h14M7 14h10" stroke="#222" strokeWidth="1.200" />
      <circle cx="24" cy="24" r="11.500" fill="#333" stroke="#888" strokeWidth="1" />
      <text x="24" y="30" fontSize="16" fontWeight="700" fill="#fff" textAnchor="middle" fontFamily="Open Sans">2</text>
    </svg>
    <div className="ml-[20px] w-px h-[60px] bg-[#555] shrink-0"></div>
  </div>
);

export default function App() {
  return (
    <div className="w-[1920px] h-[1080px] overflow-hidden flex flex-col font-['Open_Sans',sans-serif]">
      <TitleBar />
      <TabRow />
      <Ribbon />
      <FormulaBar />
      <Sheet />
      <SheetBar />
      <StatusBar />
      <Taskbar />
    </div>
  );
}
